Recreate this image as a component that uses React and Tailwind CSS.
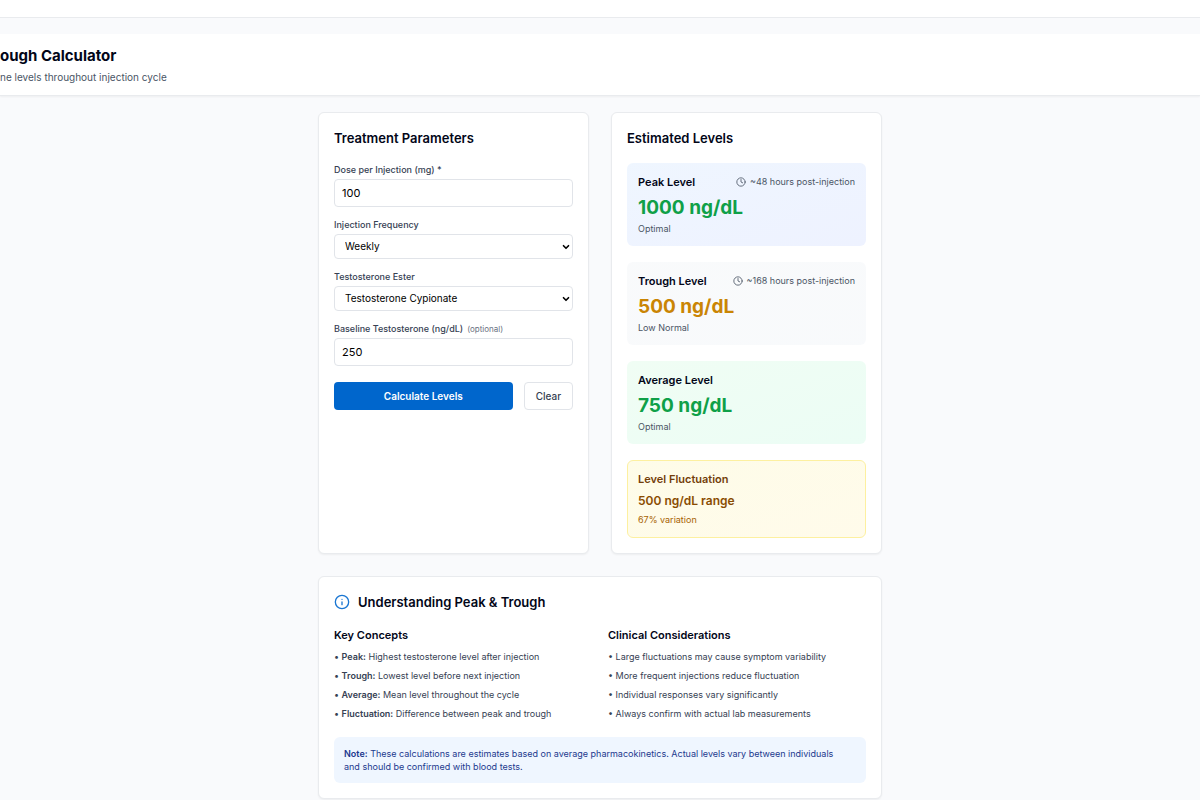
import { useState } from "react";
import { ChevronDown, Clock, Info } from "lucide-react";

const FREQUENCIES = ["Twice Weekly", "Weekly", "Every 10 Days", "Biweekly"];
const ESTERS = ["Testosterone Cypionate", "Testosterone Enanthate", "Testosterone Propionate"];

const LEVELS = [
  { label: "Peak Level", value: "1000 ng/dL", status: "Optimal", time: "~48 hours post-injection", box: "from-blue-50 to-indigo-50", text: "text-[#0fa048]" },
  { label: "Trough Level", value: "500 ng/dL", status: "Low Normal", time: "~168 hours post-injection", box: "from-gray-50 to-slate-50", text: "text-[#ca8504]" },
  { label: "Average Level", value: "750 ng/dL", status: "Optimal", time: null, box: "from-green-50 to-emerald-50", text: "text-[#0fa048]" },
];

const CONCEPTS = [
  ["Peak:", "Highest testosterone level after injection"],
  ["Trough:", "Lowest level before next injection"],
  ["Average:", "Mean level throughout the cycle"],
  ["Fluctuation:", "Difference between peak and trough"],
];

const CONSIDERATIONS = [
  "Large fluctuations may cause symptom variability",
  "More frequent injections reduce fluctuation",
  "Individual responses vary significantly",
  "Always confirm with actual lab measurements",
];

const card = "rounded-md border border-[#e9ebee] bg-white p-[15px] shadow-xs";
const heading = "text-[13px] leading-5 font-semibold text-slate-950";
const subheading = "text-[11px] leading-4 font-semibold text-slate-950";
const field = "block w-full rounded border border-[#e1e4e9] bg-white text-black";

function Field({ id, label, hint, children }) {
  return (
    <div>
      <label htmlFor={id} className="block text-[9px] leading-[14px] font-medium text-gray-700">
        {label}
        {hint && <span className="ml-1 text-[8px] font-normal text-gray-500">{hint}</span>}
      </label>
      <div className="mt-0.5">{children}</div>
    </div>
  );
}

function SelectBox({ id, value, onChange, options }) {
  return (
    <div className="relative">
      <select id={id} value={value} onChange={(e) => onChange(e.target.value)} className={`${field} h-[25px] appearance-none px-2.5 text-[10px]`}>
        {options.map((option) => <option key={option}>{option}</option>)}
      </select>
      <ChevronDown className="pointer-events-none absolute inset-y-0 right-0.5 my-auto size-2.5 text-black" strokeWidth={4} />
    </div>
  );
}

function LevelBox({ label, value, status, time, box, text }) {
  return (
    <div className={`rounded-md bg-linear-to-br px-[11px] pt-[11px] pb-2.5 ${box}`}>
      <div className="flex items-center justify-between">
        <h3 className={subheading}>{label}</h3>
        {time && (
          <span className="flex items-center gap-1 text-[9px] leading-[14px] text-gray-600">
            <Clock className="size-2.5" strokeWidth={2} />
            {time}
          </span>
        )}
      </div>
      <p className={`mt-1 text-[19px] leading-7 font-bold ${text}`}>{value}</p>
      <p className="text-[9px] leading-[14px] text-gray-600">{status}</p>
    </div>
  );
}

export default function App() {
  const [dose, setDose] = useState("100");
  const [frequency, setFrequency] = useState("Weekly");
  const [ester, setEster] = useState("Testosterone Cypionate");
  const [baseline, setBaseline] = useState("250");

  const clear = () => {
    setDose("");
    setBaseline("");
  };

  return (
    <div className="min-h-screen overflow-x-hidden bg-[#f9fafc] font-['Inter',sans-serif]">
      <div className="h-[18px] border-b border-[#e9ebee] bg-white" />

      <header className="mt-4 border-b border-[#e9ebee] bg-white pt-3 pb-2.5 shadow-xs">
        <h1 className="text-[15px] leading-5 font-bold text-slate-950">ough Calculator</h1>
        <p className="mt-[3px] text-[10px] leading-4 text-gray-600">ne levels throughout injection cycle</p>
      </header>

      <main className="mx-auto mt-4 w-full max-w-[564px]">
        <div className="grid grid-cols-2 gap-[22px]">
          <section className={card}>
            <h2 className={heading}>Treatment Parameters</h2>
            <form className="mt-[15px]" onSubmit={(e) => e.preventDefault()}>
              <div className="flex flex-col gap-[11px]">
                <Field id="dose" label="Dose per Injection (mg) *">
                  <input id="dose" type="text" value={dose} onChange={(e) => setDose(e.target.value)} className={`${field} h-7 px-[7px] text-[11px]`} />
                </Field>
                <Field id="frequency" label="Injection Frequency">
                  <SelectBox id="frequency" value={frequency} onChange={setFrequency} options={FREQUENCIES} />
                </Field>
                <Field id="ester" label="Testosterone Ester">
                  <SelectBox id="ester" value={ester} onChange={setEster} options={ESTERS} />
                </Field>
                <Field id="baseline" label="Baseline Testosterone (ng/dL)" hint="(optional)">
                  <input id="baseline" type="text" value={baseline} onChange={(e) => setBaseline(e.target.value)} className={`${field} h-7 px-[7px] text-[11px]`} />
                </Field>
              </div>
              <div className="mt-4 flex gap-[11px]">
                <button type="submit" className="h-7 flex-1 rounded bg-[#0066cc] text-[10px] font-semibold text-white">
                  Calculate Levels
                </button>
                <button type="button" onClick={clear} className="h-7 rounded border border-[#e1e4e9] bg-white px-[11px] text-[10px] font-medium text-gray-700">
                  Clear
                </button>
              </div>
            </form>
          </section>

          <section className={card}>
            <h2 className={heading}>Estimated Levels</h2>
            <div className="mt-[15px] flex flex-col gap-4">
              {LEVELS.map((level) => <LevelBox key={level.label} {...level} />)}
              <div className="rounded-md border border-[#fdf0a0] bg-linear-to-br from-yellow-50 to-amber-50 p-2.5">
                <h3 className="text-[11px] leading-4 font-semibold text-yellow-900">Level Fluctuation</h3>
                <p className="mt-1 text-[12px] leading-5 font-semibold text-yellow-800">500 ng/dL range</p>
                <p className="mt-0.5 text-[9px] leading-[14px] text-yellow-700">67% variation</p>
              </div>
            </div>
          </section>
        </div>

        <section className={`${card} mt-[22px]`}>
          <h2 className={`${heading} flex items-center gap-2`}>
            <Info className="size-4 text-[#1a76d2]" strokeWidth={2} />
            Understanding Peak &amp; Trough
          </h2>
          <div className="mt-[15px] grid grid-cols-2 gap-4">
            <div>
              <h3 className={subheading}>Key Concepts</h3>
              <ul className="mt-[7px] flex flex-col gap-[5px] text-[9px] leading-[14px] text-gray-700">
                {CONCEPTS.map(([term, text]) => (
                  <li key={term}>• <strong className="font-semibold">{term}</strong> {text}</li>
                ))}
              </ul>
            </div>
            <div>
              <h3 className={subheading}>Clinical Considerations</h3>
              <ul className="mt-[7px] flex flex-col gap-[5px] text-[9px] leading-[14px] text-gray-700">
                {CONSIDERATIONS.map((text) => <li key={text}>• {text}</li>)}
              </ul>
            </div>
          </div>
          <p className="mt-4 rounded-md bg-blue-50 py-2.5 pr-5 pl-2.5 text-[9px] leading-[13px] text-blue-900">
            <strong className="font-semibold">Note:</strong> These calculations are estimates based on average pharmacokinetics. Actual levels vary between individuals and should be confirmed with blood tests.
          </p>
        </section>
      </main>
    </div>
  );
}
